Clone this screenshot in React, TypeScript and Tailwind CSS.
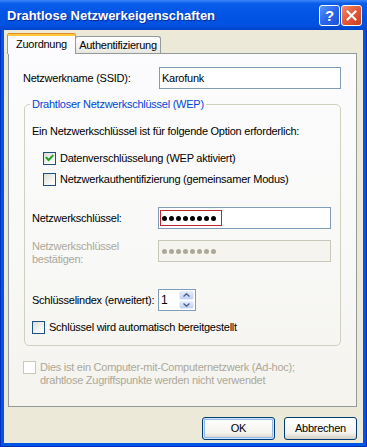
import React from "react";

function Check({ checked = false, disabled = false }: { checked?: boolean; disabled?: boolean }) {
  return (
    <span
      className={
        disabled
          ? "w-[13px] h-[13px] shrink-0 border border-[#CAC8BB] bg-white flex items-center justify-center"
          : "w-[13px] h-[13px] shrink-0 border border-[#1C5180] bg-[linear-gradient(135deg,#DCDCD7,#F4F4F0_60%,#FFFFFF)] flex items-center justify-center"
      }
    >
      {checked && (
        <svg width="9" height="9" viewBox="0 0 9 9">
          <path d="M1.5 3.8 L3.6 6 L7.6 1.8" stroke="#21A121" strokeWidth="2" fill="none" strokeLinecap="square" />
        </svg>
      )}
    </span>
  );
}

function Dots({ color }: { color: string }) {
  return (
    <div className="flex gap-[2px]">
      {[0, 1, 2, 3, 4, 5, 6, 7].map((i) => (
        <span key={i} className="w-[5px] h-[5px] rounded-full" style={{ background: color }} />
      ))}
    </div>
  );
}

export default function App() {
  return (
    <div className="w-[367px] h-[447px] flex flex-col bg-[#0055E5] shadow-[inset_1px_0_#0030C0,inset_-1px_0_#0030C0,inset_0_-1px_#0030C0] font-['Liberation_Sans',Arial,sans-serif] text-[11px] tracking-[-0.25px] text-black select-none">
      {/* Title bar */}
      <div className="h-[30px] shrink-0 flex items-center pl-[7px] pr-[5px] bg-[linear-gradient(#3A86F6,#0A5CEA_12%,#0055E5_50%,#0051E0_85%,#0043C8)]">
        <span className="flex-1 text-white font-bold text-[13px] tracking-normal leading-[16px] pt-[1px] [text-shadow:1px_1px_#0A2A9A]">
          Drahtlose Netzwerkeigenschaften
        </span>
        <div className="flex gap-[1px]">
          <div className="w-[21px] h-[21px] rounded-[3px] border border-white bg-[linear-gradient(135deg,#5A96FA,#2A66EA_50%,#1C52D6)] flex items-center justify-center text-white font-bold text-[15px] leading-none tracking-normal">
            ?
          </div>
          <div className="w-[21px] h-[21px] rounded-[3px] border border-white bg-[linear-gradient(135deg,#F08A6C,#E2583A_50%,#C9401E)] flex items-center justify-center">
            <svg width="11" height="11" viewBox="0 0 11 11">
              <path d="M1.5 1.5 L9.5 9.5 M9.5 1.5 L1.5 9.5" stroke="white" strokeWidth="2" strokeLinecap="square" />
            </svg>
          </div>
        </div>
      </div>

      {/* Body */}
      <div className="flex-1 mx-[4px] mb-[4px] bg-[#ECE9D8] flex flex-col">
        {/* Tabs */}
        <div className="pt-[3px] pl-[3px] flex items-end h-[23px]">
          <div className="relative z-10 -mb-px w-[69px] h-[21px] rounded-t-[3px] border-x border-[#919B9C] bg-[#FCFCFE] flex flex-col">
            <div className="h-[1px] bg-[#E68B2C] rounded-t-[3px]" />
            <div className="h-[2px] bg-[#FFC73C]" />
            <div className="flex-1 flex items-start justify-center pt-[2px] leading-[13px]">Zuordnung</div>
          </div>
          <div className="-ml-px w-[86px] h-[17px] rounded-t-[3px] border border-b-0 border-[#919B9C] bg-[linear-gradient(#FFFFFF,#F3F2EE_60%,#E6E5DE)] flex items-start justify-center pt-[2px] leading-[13px]">
            Authentifizierung
          </div>
        </div>

        {/* Panel */}
        <div className="ml-[4px] w-[349px] h-[354px] border border-[#919B9C] bg-[linear-gradient(#FCFCFE,#F8F8F6_60%,#F4F3EE)] flex flex-col pl-[14px]">
          {/* SSID */}
          <div className="mt-[13px] flex items-center">
            <span className="w-[136px] leading-[13px]">Netzwerkname (SSID):</span>
            <div className="w-[182px] h-[22px] border border-[#7F9DB9] bg-white flex items-center pl-[2px] leading-[13px]">
              Karofunk
            </div>
          </div>

          {/* Group */}
          <fieldset className="mt-[9px] ml-[1px] w-[317px] border border-[#D0D0BF] rounded-[5px] pb-[11px]">
            <legend className="ml-[5px] px-[2px] leading-[13px] text-[#0046D5]">Drahtloser Netzwerkschlüssel (WEP)</legend>
            <div className="flex flex-col pl-[7px]">
              <div className="mt-[14px] leading-[13px]">Ein Netzwerkschlüssel ist für folgende Option erforderlich:</div>
              <div className="mt-[14px] ml-[11px] flex items-center gap-[4px] leading-[13px]">
                <Check checked />
                <span>Datenverschlüsselung (WEP aktiviert)</span>
              </div>
              <div className="mt-[8px] ml-[11px] flex items-center gap-[4px] leading-[13px]">
                <Check />
                <span>Netzwerkauthentifizierung (gemeinsamer Modus)</span>
              </div>

              <div className="mt-[21px] flex items-center">
                <span className="w-[126px] leading-[13px]">Netzwerkschlüssel:</span>
                <div className="w-[173px] h-[22px] border border-[#7F9DB9] bg-white flex items-center pl-[1px]">
                  <div className="w-[62px] h-[16px] border border-[#C0272D] flex items-center pl-[1px]">
                    <Dots color="#000000" />
                  </div>
                </div>
              </div>

              <div className="mt-[11px] flex items-start">
                <span className="w-[126px] leading-[13px] text-[#ACA899]">
                  Netzwerkschlüssel
                  <br />
                  bestätigen:
                </span>
                <div className="w-[173px] h-[22px] border border-[#C9C7BA] bg-[#F5F4EF] flex items-center pl-[3px]">
                  <Dots color="#ACA899" />
                </div>
              </div>

              <div className="mt-[23px] flex items-center">
                <span className="w-[126px] leading-[13px]">Schlüsselindex (erweitert):</span>
                <div className="w-[38px] h-[22px] border border-[#7F9DB9] bg-white flex">
                  <div className="flex-1 flex items-center pl-[2px] leading-[13px] text-[12px]">1</div>
                  <div className="w-[16px] flex flex-col gap-[1px] p-[1px] pl-0">
                    <div className="flex-1 rounded-[2px] border border-[#E8EEFD] bg-[linear-gradient(#E3EBFE,#C0D1F7)] flex items-center justify-center">
                      <svg width="7" height="4" viewBox="0 0 7 4">
                        <path d="M0.5 3.5 L3.5 0.8 L6.5 3.5" stroke="#4D6185" strokeWidth="1.4" fill="none" />
                      </svg>
                    </div>
                    <div className="flex-1 rounded-[2px] border border-[#E8EEFD] bg-[linear-gradient(#E3EBFE,#C0D1F7)] flex items-center justify-center">
                      <svg width="7" height="4" viewBox="0 0 7 4">
                        <path d="M0.5 0.5 L3.5 3.2 L6.5 0.5" stroke="#4D6185" strokeWidth="1.4" fill="none" />
                      </svg>
                    </div>
                  </div>
                </div>
              </div>

              <div className="mt-[10px] flex items-center gap-[4px] leading-[13px]">
                <Check />
                <span>Schlüssel wird automatisch bereitgestellt</span>
              </div>
            </div>
          </fieldset>

          {/* Ad-hoc */}
          <div className="mt-[15px] flex items-start gap-[4px] leading-[13px] text-[#ACA899]">
            <Check disabled />
            <span>
              Dies ist ein Computer-mit-Computernetzwerk (Ad-hoc);
              <br />
              drahtlose Zugriffspunkte werden nicht verwendet
            </span>
          </div>
        </div>

        {/* Buttons */}
        <div className="mt-[10px] flex justify-end gap-[9px] pr-[6px]">
          <div className="w-[73px] h-[23px] rounded-[3px] border border-[#003C74] bg-[linear-gradient(#FFFFFF,#F4F3EE_70%,#D6D0C5)] shadow-[inset_0_0_0_1px_#CEE7FF,inset_0_0_0_2px_#98B8F0] flex items-center justify-center leading-[13px]">
            OK
          </div>
          <div className="w-[73px] h-[23px] rounded-[3px] border border-[#003C74] bg-[linear-gradient(#FFFFFF,#F4F3EE_70%,#D6D0C5)] flex items-center justify-center leading-[13px]">
            Abbrechen
          </div>
        </div>
      </div>
    </div>
  );
}
